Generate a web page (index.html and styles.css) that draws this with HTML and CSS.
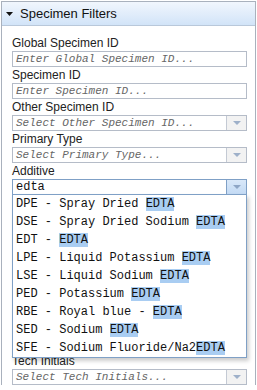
FILE: index.html
```html
<!DOCTYPE html>
<html lang="en">
<head>
    <meta charset="UTF-8">
    <meta name="viewport" content="width=device-width, initial-scale=1.0">
    <title>Specimen Filters</title>
    <link rel="stylesheet" href="styles.css">
</head>
<body>
    <div class="panel">
        <div class="panel-header">
            <svg class="toggle-icon" width="7" height="4" viewBox="0 0 7 4"><polygon points="0,0 7,0 3.5,4" fill="#111"/></svg>
            <span>Specimen Filters</span>
        </div>

        <div class="panel-body">
            <div class="field">
                <label>Global Specimen ID</label>
                <div class="input"><span class="placeholder">Enter Global Specimen ID...</span></div>
            </div>
            <div class="field">
                <label>Specimen ID</label>
                <div class="input"><span class="placeholder">Enter Specimen ID...</span></div>
            </div>
            <div class="field">
                <label>Other Specimen ID</label>
                <div class="select">
                    <span class="placeholder">Select Other Specimen ID...</span>
                    <span class="select-btn"><svg width="8" height="4" viewBox="0 0 8 4"><polygon points="0,0 8,0 4,4"/></svg></span>
                </div>
            </div>
            <div class="field">
                <label>Primary Type</label>
                <div class="select">
                    <span class="placeholder">Select Primary Type...</span>
                    <span class="select-btn"><svg width="8" height="4" viewBox="0 0 8 4"><polygon points="0,0 8,0 4,4"/></svg></span>
                </div>
            </div>
            <!-- open combo: its list covers the fields below it -->
            <div class="field combo">
                <label>Additive</label>
                <div class="select active">
                    <span class="value">edta</span>
                    <span class="select-btn"><svg width="8" height="4" viewBox="0 0 8 4"><polygon points="0,0 8,0 4,4"/></svg></span>
                </div>
                <ul class="dropdown">
                    <li>DPE - Spray Dried <mark>EDTA</mark></li>
                    <li>DSE - Spray Dried Sodium <mark>EDTA</mark></li>
                    <li>EDT - <mark>EDTA</mark></li>
                    <li>LPE - Liquid Potassium <mark>EDTA</mark></li>
                    <li>LSE - Liquid Sodium <mark>EDTA</mark></li>
                    <li>PED - Potassium <mark>EDTA</mark></li>
                    <li>RBE - Royal blue - <mark>EDTA</mark></li>
                    <li>SED - Sodium <mark>EDTA</mark></li>
                    <li>SFE - Sodium Fluoride/Na2<mark>EDTA</mark></li>
                </ul>
            </div>
            <div class="field">
                <label>Tech Initials</label>
                <div class="select">
                    <span class="placeholder">Select Tech Initials...</span>
                    <span class="select-btn"><svg width="8" height="4" viewBox="0 0 8 4"><polygon points="0,0 8,0 4,4"/></svg></span>
                </div>
            </div>
        </div>
    </div>
</body>
</html>
```

FILE: styles.css
```css
* { margin: 0; padding: 0; box-sizing: border-box; }
body { font-family: 'Liberation Sans', Arial, sans-serif; background: #fff; padding: 1px 1px 0 1px; overflow: hidden; }
.panel { border: 1px solid #a9b1bd; border-bottom: none; background: #fff; }
.panel-header { height: 24px; display: flex; align-items: center; gap: 7px; padding-left: 4px; font-size: 13px; color: #111; background: linear-gradient(#f1f6fd, #d2e4f8); border-bottom: 1px solid #b9c8da; }
.toggle-icon { margin-top: 1px; }
.panel-body { padding: 9px 8px 0 10px; }
.field { position: relative; }
.field label { display: block; height: 16px; line-height: 16px; font-size: 12px; color: #222; }
.input, .select { height: 16px; border: 1px solid #b5bcc8; display: flex; align-items: center; font-family: 'Liberation Mono', monospace; background: #fff; }
.placeholder { font-size: 11px; font-style: italic; color: #666; padding-left: 3px; flex: 1; white-space: nowrap; overflow: hidden; }
.value { font-size: 12px; color: #111; padding-left: 3px; flex: 1; }
.select { justify-content: space-between; }
.select-btn { width: 20px; height: 100%; margin-left: auto; border-left: 1px solid #c4cad4; background: #f2f2f2; display: flex; align-items: center; justify-content: center; }
.select-btn svg { fill: #9eb0c9; }
.select.active { border-color: #7fa0c6; }
.select.active .select-btn { border-left-color: #7fa0c6; background: linear-gradient(#d9e8f9, #c3daf4); }
.select.active .select-btn svg { fill: #8ea6c6; }
.combo { margin-bottom: 158px; }
.dropdown { position: absolute; top: 31px; left: 0; right: 0; z-index: 10; list-style: none; background: #fff; border: 1px solid #7fa0c6; box-shadow: 2px 3px 4px rgba(0, 0, 0, 0.2); }
.dropdown li { height: 18px; line-height: 18px; padding-left: 3px; font-family: 'Liberation Mono', monospace; font-size: 12px; color: #111; white-space: nowrap; }
.dropdown mark { background: #a9cdf2; color: #111; }
```
